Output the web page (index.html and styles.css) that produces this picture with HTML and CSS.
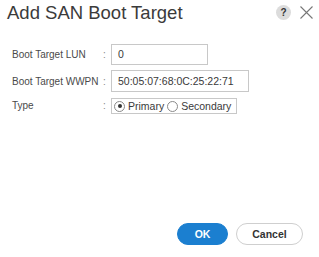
FILE: index.html
```html
<!DOCTYPE html>
<html lang="en">

<head>
    <meta charset="UTF-8" />
    <title>Add SAN Boot Target</title>
    <link rel="stylesheet" href="styles.css">
</head>

<body>
    <div class="dialog">
        <div class="header">
            <h1 class="title">Add SAN Boot Target</h1>
            <div class="tools">
                <span class="help">?</span>
                <svg class="close" width="13" height="13" viewBox="0 0 13 13">
                    <path d="M0.5 0.5 L12.5 12.5 M12.5 0.5 L0.5 12.5" stroke="#777" stroke-width="1.1" fill="none" />
                </svg>
            </div>
        </div>

        <div class="form">
            <label class="label">Boot Target LUN</label>
            <span class="colon">:</span>
            <div class="field lun">0</div>

            <label class="label">Boot Target WWPN</label>
            <span class="colon">:</span>
            <div class="field wwpn">50:05:07:68:0C:25:22:71</div>

            <label class="label">Type</label>
            <span class="colon">:</span>
            <div class="radios">
                <span class="radio checked"></span>
                <span class="opt">Primary</span>
                <span class="radio"></span>
                <span class="opt">Secondary</span>
            </div>
        </div>

        <div class="footer">
            <button class="btn primary">OK</button>
            <button class="btn">Cancel</button>
        </div>
    </div>
</body>

</html>
```

FILE: styles.css
```css
* {
    box-sizing: border-box;
}

body {
    margin: 0;
    background-color: #fff;
    font-family: "Liberation Sans", Arial, sans-serif;
}

.dialog {
    width: 319px;
    height: 257px;
    display: flex;
    flex-direction: column;
}

.header {
    display: flex;
    align-items: center;
    justify-content: space-between;
    height: 25px;
    padding: 0 6px 0 7px;
}

.title {
    margin: 0;
    font-size: 18.5px;
    font-weight: 400;
    color: #3b3b3b;
}

.tools {
    display: flex;
    align-items: center;
    column-gap: 9px;
}

.help {
    width: 15px;
    height: 15px;
    border-radius: 50%;
    background-color: #dcdcdc;
    color: #333;
    font-size: 10px;
    font-weight: 700;
    line-height: 15px;
    text-align: center;
}

.form {
    display: grid;
    grid-template-columns: 90px 9px 1fr;
    align-items: center;
    row-gap: 5px;
    margin-top: 19px;
    padding-left: 12px;
}

.label {
    font-size: 10px;
    color: #4a4a4a;
    white-space: nowrap;
}

.colon {
    font-size: 10px;
    color: #888;
    padding-left: 1px;
}

.field {
    height: 21px;
    border: 1px solid #c8c8c8;
    font-size: 10.5px;
    color: #3a3a3a;
    line-height: 19px;
    padding-left: 6px;
}

.lun {
    width: 97px;
}

.wwpn {
    width: 138px;
    height: 22px;
    line-height: 20px;
}

.radios {
    display: flex;
    align-items: center;
    width: 126px;
    height: 16px;
    border: 1px solid #c8c8c8;
    padding-left: 2px;
    margin-top: 1px;
}

.radio {
    width: 11px;
    height: 11px;
    border: 1px solid #8a8a8a;
    border-radius: 50%;
    display: flex;
    align-items: center;
    justify-content: center;
}

.radio.checked::after {
    content: "";
    width: 4px;
    height: 4px;
    border-radius: 50%;
    background-color: #333;
}

.opt {
    font-size: 10.5px;
    color: #3a3a3a;
    margin: 0 3px 0 3px;
}

.footer {
    margin-top: auto;
    display: flex;
    justify-content: flex-end;
    column-gap: 8px;
    padding: 0 16px 12px 0;
}

.btn {
    height: 22px;
    border-radius: 11px;
    border: 1px solid #cfcfcf;
    background-color: #fff;
    color: #333;
    font-family: "Liberation Sans", Arial, sans-serif;
    font-size: 10.5px;
    font-weight: 700;
    width: 67px;
    padding: 0;
}

.btn.primary {
    width: 51px;
    border-color: #1b7fd0;
    background-color: #1b7fd0;
    color: #fff;
}
```
